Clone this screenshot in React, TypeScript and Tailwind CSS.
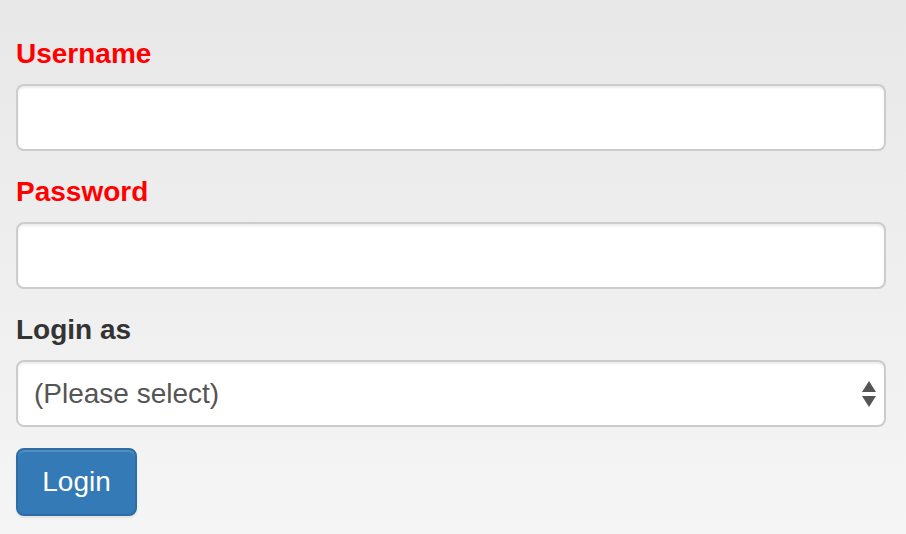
export default function App() {
  return (
    <div
      className="w-[906px] h-[534px] overflow-hidden bg-gradient-to-b from-[#e8e8e8] to-[#f5f5f5] pl-4 pr-5 pt-[38px]"
      style={{ fontFamily: '"Liberation Sans", Arial, sans-serif' }}
    >
      <div className="flex flex-col">
        <label className="block text-[28px] font-bold leading-[32px] text-[#ff0000] mb-[14px]">Username</label>
        <input
          type="text"
          className="block h-[67px] w-full rounded-[8px] border-2 border-[#cccccc] bg-white px-4 text-[28px] shadow-[inset_0_2px_2px_rgba(0,0,0,0.075)] outline-none mb-[25px]"
        />
        <label className="block text-[28px] font-bold leading-[32px] text-[#ff0000] mb-[14px]">Password</label>
        <input
          type="password"
          className="block h-[67px] w-full rounded-[8px] border-2 border-[#cccccc] bg-white px-4 text-[28px] shadow-[inset_0_2px_2px_rgba(0,0,0,0.075)] outline-none mb-[25px]"
        />
        <label className="block text-[28px] font-bold leading-[32px] text-[#333333] mb-[14px]">Login as</label>
        <div className="relative h-[67px] w-full rounded-[8px] border-2 border-[#cccccc] bg-white shadow-[inset_0_2px_2px_rgba(0,0,0,0.075)] mb-[21px] flex items-center pl-4">
          <span className="text-[28px] text-[#555555] leading-none">(Please select)</span>
          <svg className="absolute right-[8px] top-[19px]" width="14" height="26" viewBox="0 0 14 26">
            <polygon points="7,0 14,11 0,11" fill="#555555" />
            <polygon points="0,15 14,15 7,26" fill="#555555" />
          </svg>
        </div>
        <div>
          <button
            type="button"
            className="h-[68px] w-[121px] rounded-[8px] border-2 border-[#2e6da4] bg-[#337ab7] text-[28px] text-white leading-none shadow-[inset_0_2px_0_rgba(255,255,255,0.15),0_2px_2px_rgba(0,0,0,0.075)] flex items-center justify-center"
          >
            Login
          </button>
        </div>
      </div>
    </div>
  );
}
